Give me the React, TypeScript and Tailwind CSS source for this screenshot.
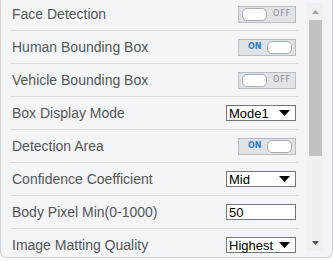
import React from 'react';

type Row =
  | { label: string; kind: 'toggle'; on: boolean }
  | { label: string; kind: 'select'; value: string }
  | { label: string; kind: 'input'; value: string };

const rows: Row[] = [
  { label: 'Face Detection', kind: 'toggle', on: false },
  { label: 'Human Bounding Box', kind: 'toggle', on: true },
  { label: 'Vehicle Bounding Box', kind: 'toggle', on: false },
  { label: 'Box Display Mode', kind: 'select', value: 'Mode1' },
  { label: 'Detection Area', kind: 'toggle', on: true },
  { label: 'Confidence Coefficient', kind: 'select', value: 'Mid' },
  { label: 'Body Pixel Min(0-1000)', kind: 'input', value: '50' },
  { label: 'Image Matting Quality', kind: 'select', value: 'Highest' },
];

function Toggle({ on }: { on: boolean }) {
  const knob = <div className="w-[25px] h-[13px] bg-white border border-[#a9acb1] rounded-[5px]" />;
  return (
    <div className="w-[58px] h-[17px] border border-[#b8bbc0] bg-[#dfe2e6] flex items-center justify-between px-[3px] font-['DejaVu_Sans',sans-serif] text-[8px] leading-none">
      {on ? (
        <>
          <span className="ml-[6px] font-bold text-[#2f7fc6]">ON</span>
          {knob}
        </>
      ) : (
        <>
          {knob}
          <span className="mr-[1px] tracking-[0.8px] text-[#8a8d92]">OFF</span>
        </>
      )}
    </div>
  );
}

function Select({ value }: { value: string }) {
  return (
    <div className="w-[70px] h-[16px] border border-[#767676] bg-white flex items-center justify-between pl-[2px] pr-[5px]">
      <span className="text-[13px] leading-none text-black">{value}</span>
      <svg width="11" height="6" viewBox="0 0 11 6">
        <polygon points="0,0 11,0 5.5,6" fill="#000" />
      </svg>
    </div>
  );
}

function TextInput({ value }: { value: string }) {
  return (
    <div className="w-[70px] h-[16px] border border-[#767676] bg-white flex items-center pl-[2px]">
      <span className="text-[13px] leading-none text-black">{value}</span>
    </div>
  );
}

function Scrollbar() {
  return (
    <div className="mt-[3px] w-[16px] h-[248px] bg-[#f0f0f0] flex flex-col">
      <div className="h-[17px] flex items-center justify-center">
        <svg width="7" height="4" viewBox="0 0 7 4">
          <polygon points="3.5,0 7,4 0,4" fill="#a3a3a3" />
        </svg>
      </div>
      <div className="ml-[2px] w-[13px] h-[136px] bg-[#c1c1c1]" />
      <div className="flex-1" />
      <div className="h-[17px] flex items-center justify-center">
        <svg width="7" height="4" viewBox="0 0 7 4">
          <polygon points="0,0 7,0 3.5,4" fill="#505050" />
        </svg>
      </div>
    </div>
  );
}

export default function App() {
  return (
    <div className="w-[333px] h-[261px] bg-white font-['Liberation_Sans',Arial,sans-serif]">
      <div className="h-[258px] bg-[#f4f5f9] border-x border-b border-[#cfd1d6] rounded-b-[6px] flex items-start">
        <div className="w-[306px] h-[253px] overflow-hidden pl-[9px]">
          <div className="-mt-[2px] w-[288px]">
            {rows.map((row) => (
              <div
                key={row.label}
                className="h-[33px] border-b border-[#dcdde2] flex items-center justify-between pl-[2px] pr-[2px]"
              >
                <span className="text-[14px] text-[#555555]">{row.label}</span>
                {row.kind === 'toggle' && <Toggle on={row.on} />}
                {row.kind === 'select' && <Select value={row.value} />}
                {row.kind === 'input' && <TextInput value={row.value} />}
              </div>
            ))}
          </div>
        </div>
        <Scrollbar />
      </div>
    </div>
  );
}
